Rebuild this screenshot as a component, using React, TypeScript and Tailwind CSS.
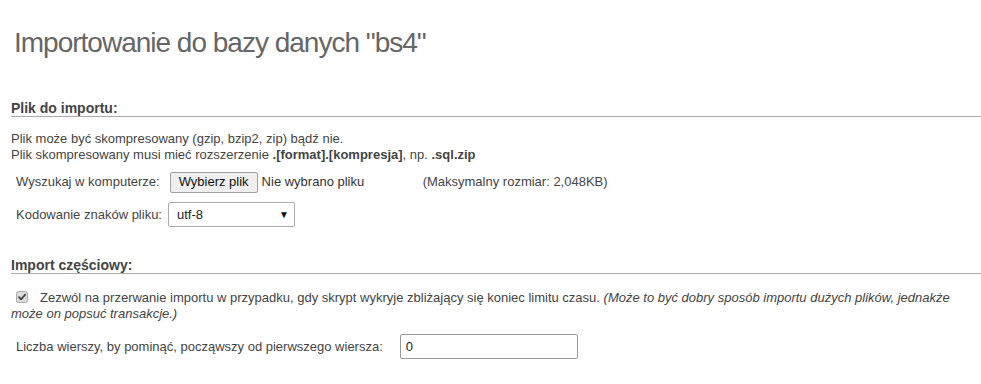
import React from "react";

function Check() {
  return (
    <svg width="12" height="12" viewBox="0 0 12 12" className="inline-block align-[-1px]">
      <rect x="0.5" y="0.5" width="11" height="11" rx="2" fill="#dcdcdc" stroke="#a8a8a8" />
      <path d="M3 6.2 L5 8.3 L9.2 3.6" fill="none" stroke="#444" strokeWidth="1.8" strokeLinecap="round" strokeLinejoin="round" />
    </svg>
  );
}

export default function App() {
  return (
    <div className="w-[981px] h-[384px] bg-white text-[#444] text-[13px] leading-[16px] overflow-hidden" style={{ fontFamily: '"Liberation Sans", Arial, sans-serif' }}>
      <div className="pl-[11px]">
        <h2 className="pt-[29px] pl-[3px] text-[28px] leading-[28px] tracking-[-1px] text-[#666] font-normal">Importowanie do bazy danych "bs4"</h2>

        <h3 className="mt-[43px] text-[14px] leading-[16px] font-bold text-[#444] border-b border-[#aaa]">Plik do importu:</h3>
        <div className="mt-[14px]">
          <div>Plik może być skompresowany (gzip, bzip2, zip) bądź nie.</div>
          <div>
            Plik skompresowany musi mieć rozszerzenie <b>.[format].[kompresja]</b>, np. <b>.sql.zip</b>
          </div>
        </div>

        <div className="mt-[8px] ml-[5px] flex items-center h-[22px]">
          <span>Wyszukaj w komputerze:</span>
          <div className="ml-[10px] w-[253px] flex items-center">
            <span className="h-[21px] px-[8px] flex items-center bg-[#efefef] border border-[#a0a0a0] rounded-[2px] text-[#111]">Wybierz plik</span>
            <span className="ml-[4px] text-[#333]">Nie wybrano pliku</span>
          </div>
          <span>(Maksymalny rozmiar: 2,048KB)</span>
        </div>

        <div className="mt-[9px] ml-[5px] flex items-center h-[25px]">
          <span>Kodowanie znaków pliku:</span>
          <div className="ml-[6px] w-[127px] h-[25px] border border-[#aaa] rounded-[2px] flex items-center justify-between pl-[8px] pr-[5px] text-[#222]">
            <span>utf-8</span>
            <span className="text-[10px] leading-[10px] text-[#111]">▼</span>
          </div>
        </div>

        <h3 className="mt-[30px] text-[14px] leading-[16px] font-bold text-[#444] border-b border-[#aaa]">Import częściowy:</h3>

        <div className="mt-[16px] pr-[20px]">
          <span className="ml-[5px] mr-[12px]"><Check /></span>
          Zezwól na przerwanie importu w przypadku, gdy skrypt wykryje zbliżający się koniec limitu czasu.{" "}
          <i>(Może to być dobry sposób importu dużych plików, jednakże może on popsuć transakcje.)</i>
        </div>

        <div className="mt-[12px] ml-[5px] flex items-center h-[25px]">
          <span>Liczba wierszy, by pominąć, począwszy od pierwszego wiersza:</span>
          <div className="ml-[17px] w-[178px] h-[25px] border border-[#999] rounded-[2px] flex items-center pl-[5px] text-[#222]">0</div>
        </div>
      </div>
    </div>
  );
}
